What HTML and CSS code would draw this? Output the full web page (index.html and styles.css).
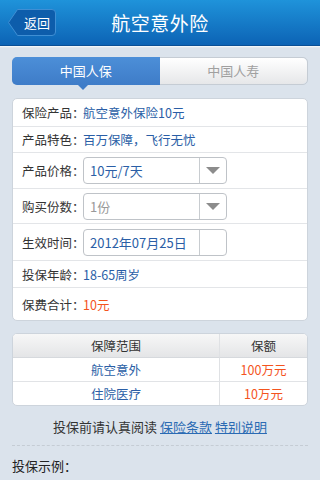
FILE: index.html
```html
<!DOCTYPE html>
<html lang="zh-CN">
<head>
    <meta charset="UTF-8">
    <meta name="viewport" content="width=device-width, initial-scale=1.0">
    <title>航空意外险</title>
    <link rel="stylesheet" href="styles.css">
</head>
<body>
    <header class="topbar">
        <a class="back-btn" href="#">
            <svg class="back-shape" width="50" height="29" viewBox="0 0 50 29">
                <path d="M10.5 1.5 H45 a3.5 3.5 0 0 1 3.5 3.5 V24 a3.5 3.5 0 0 1 -3.5 3.5 H10.5 L1.5 14.5 Z" fill="#0d5dab" stroke="#3f8fd4" stroke-width="1"/>
            </svg>
            <span class="back-text">返回</span>
        </a>
        <h1>航空意外险</h1>
    </header>

    <div class="container">
        <div class="tabs">
            <div class="tab active">中国人保</div>
            <div class="tab">中国人寿</div>
        </div>

        <div class="card">
            <div class="row r1">
                <span class="label">保险产品：</span>
                <span class="value">航空意外保险10元</span>
            </div>
            <div class="row r2">
                <span class="label">产品特色：</span>
                <span class="value">百万保障，飞行无忧</span>
            </div>
            <div class="row r3">
                <span class="label">产品价格：</span>
                <div class="select">
                    <span class="select-text">10元/7天</span>
                    <span class="select-btn"><i class="arrow"></i></span>
                </div>
            </div>
            <div class="row r4">
                <span class="label">购买份数：</span>
                <div class="select">
                    <span class="select-text muted">1份</span>
                    <span class="select-btn"><i class="arrow"></i></span>
                </div>
            </div>
            <div class="row r5">
                <span class="label">生效时间：</span>
                <div class="select">
                    <span class="select-text">2012年07月25日</span>
                    <span class="select-btn"></span>
                </div>
            </div>
            <div class="row r6">
                <span class="label">投保年龄：</span>
                <span class="value">18-65周岁</span>
            </div>
            <div class="row r7">
                <span class="label">保费合计：</span>
                <span class="value price">10元</span>
            </div>
        </div>

        <table class="cover">
            <thead>
                <tr>
                    <th class="c1">保障范围</th>
                    <th class="c2">保额</th>
                </tr>
            </thead>
            <tbody>
                <tr>
                    <td class="c1">航空意外</td>
                    <td class="c2">100万元</td>
                </tr>
                <tr class="last">
                    <td class="c1">住院医疗</td>
                    <td class="c2">10万元</td>
                </tr>
            </tbody>
        </table>

        <p class="notice">投保前请认真阅读 <a href="#">保险条款</a> <a href="#">特别说明</a></p>
        <div class="dash"></div>
        <p class="example">投保示例：</p>
    </div>
</body>
</html>
```

FILE: styles.css
```css
/* 航空意外险 page */
body {
    margin: 0;
    padding: 0;
    background-color: #dbe3ec;
    font-family: "Noto Sans CJK SC", "Liberation Sans", sans-serif;
    font-size: 13px;
    color: #333;
    overflow: hidden;
}

.topbar {
    height: 45px;
    background: linear-gradient(#1f93da, #0c63b5);
    border-bottom: 1px solid #0a4f95;
    box-shadow: 0 1px 0 #f2f5f9, 0 2px 0 #e3e8ee;
    display: flex;
    align-items: center;
    justify-content: center;
    position: relative;
}

h1 {
    margin: 0;
    font-size: 19px;
    font-weight: normal;
    color: #fff;
    letter-spacing: 0.5px;
}

.back-btn {
    position: absolute;
    left: 7px;
    top: 8px;
    width: 50px;
    height: 29px;
    text-decoration: none;
}

.back-shape {
    display: block;
}

.back-text {
    position: absolute;
    left: 12px;
    top: 0;
    width: 36px;
    line-height: 29px;
    text-align: center;
    color: #fff;
    font-size: 13px;
}

.container {
    padding: 11px 12px 0 12px;
}

.tabs {
    display: flex;
    border-radius: 5px;
    border: 1px solid #c5ccd4;
    box-sizing: border-box;
    height: 28px;
}

.tab {
    flex: 1;
    text-align: center;
    line-height: 26px;
    color: #a0a0a0;
    background: linear-gradient(#ffffff, #e6e7e9);
    border-radius: 0 5px 5px 0;
}

.tab.active {
    color: #fff;
    background: linear-gradient(#4c8fd8, #3e7cc8);
    border-radius: 5px 0 0 5px;
    position: relative;
    margin: -1px 0 -1px -1px;
    line-height: 28px;
}

.tab.active::after {
    content: "";
    position: absolute;
    left: 66px;
    bottom: -5px;
    border-left: 5px solid transparent;
    border-right: 5px solid transparent;
    border-top: 5px solid #3e7cc8;
}

.card {
    margin-top: 13px;
    background: #fff;
    border: 1px solid #cdd4dc;
    border-radius: 5px;
    font-size: 12.5px;
}

.row {
    display: flex;
    align-items: center;
    padding-left: 9px;
    border-bottom: 1px solid #e3e5e8;
    box-sizing: border-box;
}

.row:last-child {
    border-bottom: none;
}

.r1 { height: 28px; }
.r2 { height: 26px; }
.r3 { height: 36px; }
.r4 { height: 35px; }
.r5 { height: 37px; }
.r6 { height: 27px; }
.r7 { height: 32px; }

.label {
    flex: none;
    width: 61px;
    color: #333;
    white-space: nowrap;
}

.value {
    color: #2a5ea6;
}

.value.price {
    color: #f4541e;
}

.select {
    display: flex;
    width: 144px;
    height: 27px;
    border: 1px solid #bfc3c8;
    border-radius: 4px;
    box-sizing: border-box;
    background: #fff;
}

.select-text {
    flex: 1;
    line-height: 25px;
    padding-left: 6px;
    color: #2a5ea6;
    font-size: 13px;
}

.select-text.muted {
    color: #999;
}

.select-btn {
    width: 26px;
    border-left: 1px solid #c8ccd0;
    display: flex;
    align-items: center;
    justify-content: center;
}

.arrow {
    width: 0;
    height: 0;
    border-left: 7px solid transparent;
    border-right: 7px solid transparent;
    border-top: 7px solid #8c8c8c;
}

.cover {
    margin-top: 12px;
    width: 100%;
    border-collapse: separate;
    border-spacing: 0;
    border: 1px solid #cdd4dc;
    border-radius: 5px;
    background: #fff;
    overflow: hidden;
    font-size: 12.5px;
}

.cover th,
.cover td {
    text-align: center;
    padding: 0;
    height: 23px;
    font-weight: normal;
    border-bottom: 1px solid #e1e3e6;
}

.cover th {
    background: linear-gradient(#f7f7f7, #e4e5e7);
    color: #333;
    border-bottom: 1px solid #d6d9dd;
}

.cover tr.last td {
    border-bottom: none;
}

.cover .c1 {
    width: 206px;
    border-right: 1px solid #dfe1e4;
}

td.c1 {
    color: #2a5ea6;
}

td.c2 {
    color: #f4541e;
}

.notice {
    margin: 10px 0 0 0;
    text-align: center;
    color: #333;
    line-height: 22px;
}

.notice a {
    color: #2a6ab3;
}

.dash {
    margin-top: 7px;
    border-top: 1px dashed #c5ccd4;
}

.example {
    margin: 8px 0 0 0;
    font-size: 13px;
    color: #222;
    line-height: 24px;
}
```
